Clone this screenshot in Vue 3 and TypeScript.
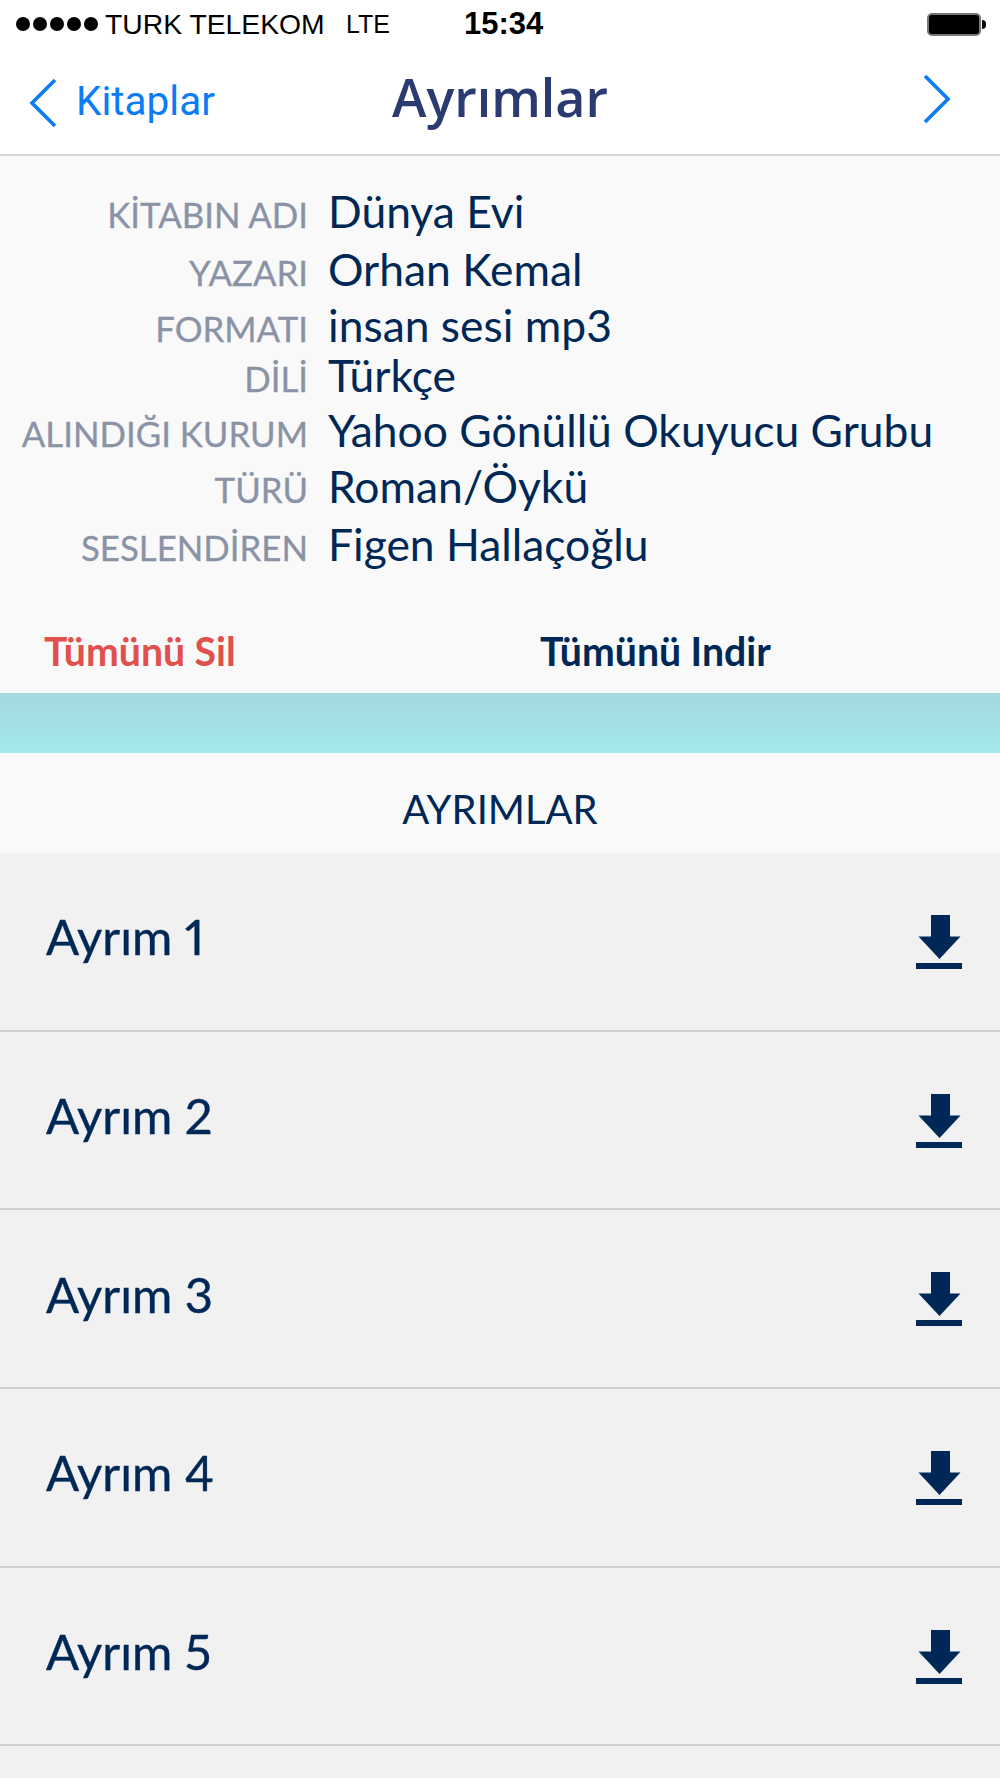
<script setup lang="ts">
const info: { label: string; value: string }[] = [
  { label: 'KİTABIN ADI', value: 'Dünya Evi' },
  { label: 'YAZARI', value: 'Orhan Kemal' },
  { label: 'FORMATI', value: 'insan sesi mp3' },
  { label: 'DİLİ', value: 'Türkçe' },
  { label: 'ALINDIĞI KURUM', value: 'Yahoo Gönüllü Okuyucu Grubu' },
  { label: 'TÜRÜ', value: 'Roman/Öykü' },
  { label: 'SESLENDİREN', value: 'Figen Hallaçoğlu' },
]
const parts: string[] = ['Ayrım 1', 'Ayrım 2', 'Ayrım 3', 'Ayrım 4', 'Ayrım 5']
</script>

<template>
  <div class="page">
    <header class="status">
      <div class="dots"><i v-for="n in 5" :key="n"></i></div>
      <span class="carrier">TURK TELEKOM</span>
      <span class="net">LTE</span>
      <span class="time">15:34</span>
      <div class="battery"><b></b><em></em></div>
    </header>

    <nav class="nav">
      <svg class="chev-l" width="30" height="50" viewBox="0 0 30 50">
        <path d="M26 2 L3 25 L26 48" fill="none" stroke="#0a7cf5" stroke-width="3.6" />
      </svg>
      <span class="back">Kitaplar</span>
      <h1 class="title">Ayrımlar</h1>
      <svg class="chev-r" width="30" height="50" viewBox="0 0 30 50">
        <path d="M3 2 L26 25 L3 48" fill="none" stroke="#0a7cf5" stroke-width="3.6" />
      </svg>
    </nav>

    <section class="info">
      <template v-for="row in info" :key="row.label">
        <span class="label">{{ row.label }}</span>
        <span class="value">{{ row.value }}</span>
      </template>
    </section>

    <div class="actions">
      <span class="del">Tümünü Sil</span>
      <span class="all">Tümünü Indir</span>
    </div>

    <div class="band"></div>

    <div class="section-title">AYRIMLAR</div>

    <ul class="list">
      <li v-for="p in parts" :key="p" class="row">
        <span class="name">{{ p }}</span>
        <svg class="dl" width="46" height="54" viewBox="0 0 46 54">
          <path d="M15 0 H34 V21.500 H44.500 L23.500 44 L2.500 21.500 H15 Z" fill="#002856" />
          <rect x="0" y="48" width="46" height="6" fill="#002856" />
        </svg>
      </li>
    </ul>
  </div>
</template>

<style>
html, body { margin: 0; background: #f1f1f1; }
</style>

<style scoped>
.page {
  width: 1000px;
  height: 1778px;
  overflow: hidden;
  background: #f1f1f1;
  font-family: Lato, "Open Sans", sans-serif;
}
.status {
  height: 48px;
  background: #fff;
  display: flex;
  align-items: center;
  padding-left: 16px;
  font-family: "Liberation Sans", Arial, sans-serif;
  color: #000;
  box-sizing: border-box;
}
.dots { display: flex; gap: 3px; }
.dots i { width: 14px; height: 14px; border-radius: 50%; background: #000; display: block; }
.carrier { margin-left: 7px; font-size: 28.300px; width: 241px; white-space: nowrap; }
.net { font-size: 25px; width: 118px; }
.time { font-size: 31px; font-weight: 700; width: 463px; }
.battery { display: flex; align-items: center; }
.battery b { display: block; width: 50px; height: 19px; background: #000; border: 2px solid #777; border-radius: 5px; }
.battery em { display: block; width: 4px; height: 9px; background: #000; border-radius: 0 4px 4px 0; margin-left: 1px; }

.nav {
  height: 108px;
  background: #fff;
  display: flex;
  align-items: center;
  position: relative;
  box-sizing: border-box;
  border-bottom: 2px solid #d8d8d8;
  font-family: Roboto, sans-serif;
}
.chev-l { margin-left: 29px; margin-top: 4px; }
.back { margin-left: 17px; font-size: 40.500px; color: #0a7cf5; line-height: 1; }
.title {
  position: absolute;
  left: 0;
  right: 0;
  top: 15px;
  margin: 0;
  text-align: center;
  font-size: 52px;
  line-height: 68px;
  font-weight: 600;
  color: #2b3a70;
  font-family: "Open Sans", sans-serif;
  pointer-events: none;
}
.chev-r { margin-left: auto; margin-right: 48px; margin-top: -4px; }

.info {
  background: #f9f9f9;
  display: grid;
  grid-template-columns: 308px 1fr;
  grid-template-rows: 58px 56px 50px 55px 56px 58px 44px;
  column-gap: 20px;
  align-items: baseline;
  padding-top: 33px;
}
.label { text-align: right; font-size: 34.800px; color: #8a93a6; white-space: nowrap; line-height: 1; -webkit-text-stroke: 0.3px #8a93a6; }
.value { font-size: 44.400px; color: #002856; white-space: nowrap; line-height: 1; }

.actions {
  background: #f9f9f9;
  height: 127px;
  box-sizing: border-box;
  display: flex;
  align-items: center;
  font-size: 39.200px;
  font-weight: 700;
  padding-top: 42px;
}
.del { color: #e0504c; margin-left: 44px; width: 496px; }
.all { color: #002856; }

.band {
  height: 60px;
  background: linear-gradient(#a5d7e0, #a3e9ec);
}

.section-title {
  height: 100px;
  box-sizing: border-box;
  padding-top: 12px;
  background: #f9f9f9;
  display: flex;
  align-items: center;
  justify-content: center;
  font-size: 40px;
  color: #002856;
}

.list { list-style: none; margin: 0; padding: 0; }
.row {
  height: 178.700px;
  box-sizing: border-box;
  border-bottom: 2px solid #cfcfcf;
  display: flex;
  align-items: center;
  justify-content: space-between;
  padding: 0 38px 0 46px;
}
.name { font-size: 49px; color: #002856; margin-top: -10px; font-feature-settings: "pnum"; -webkit-text-stroke: 0.4px #002856; }
.dl { display: block; margin-top: 1px; }
</style>
